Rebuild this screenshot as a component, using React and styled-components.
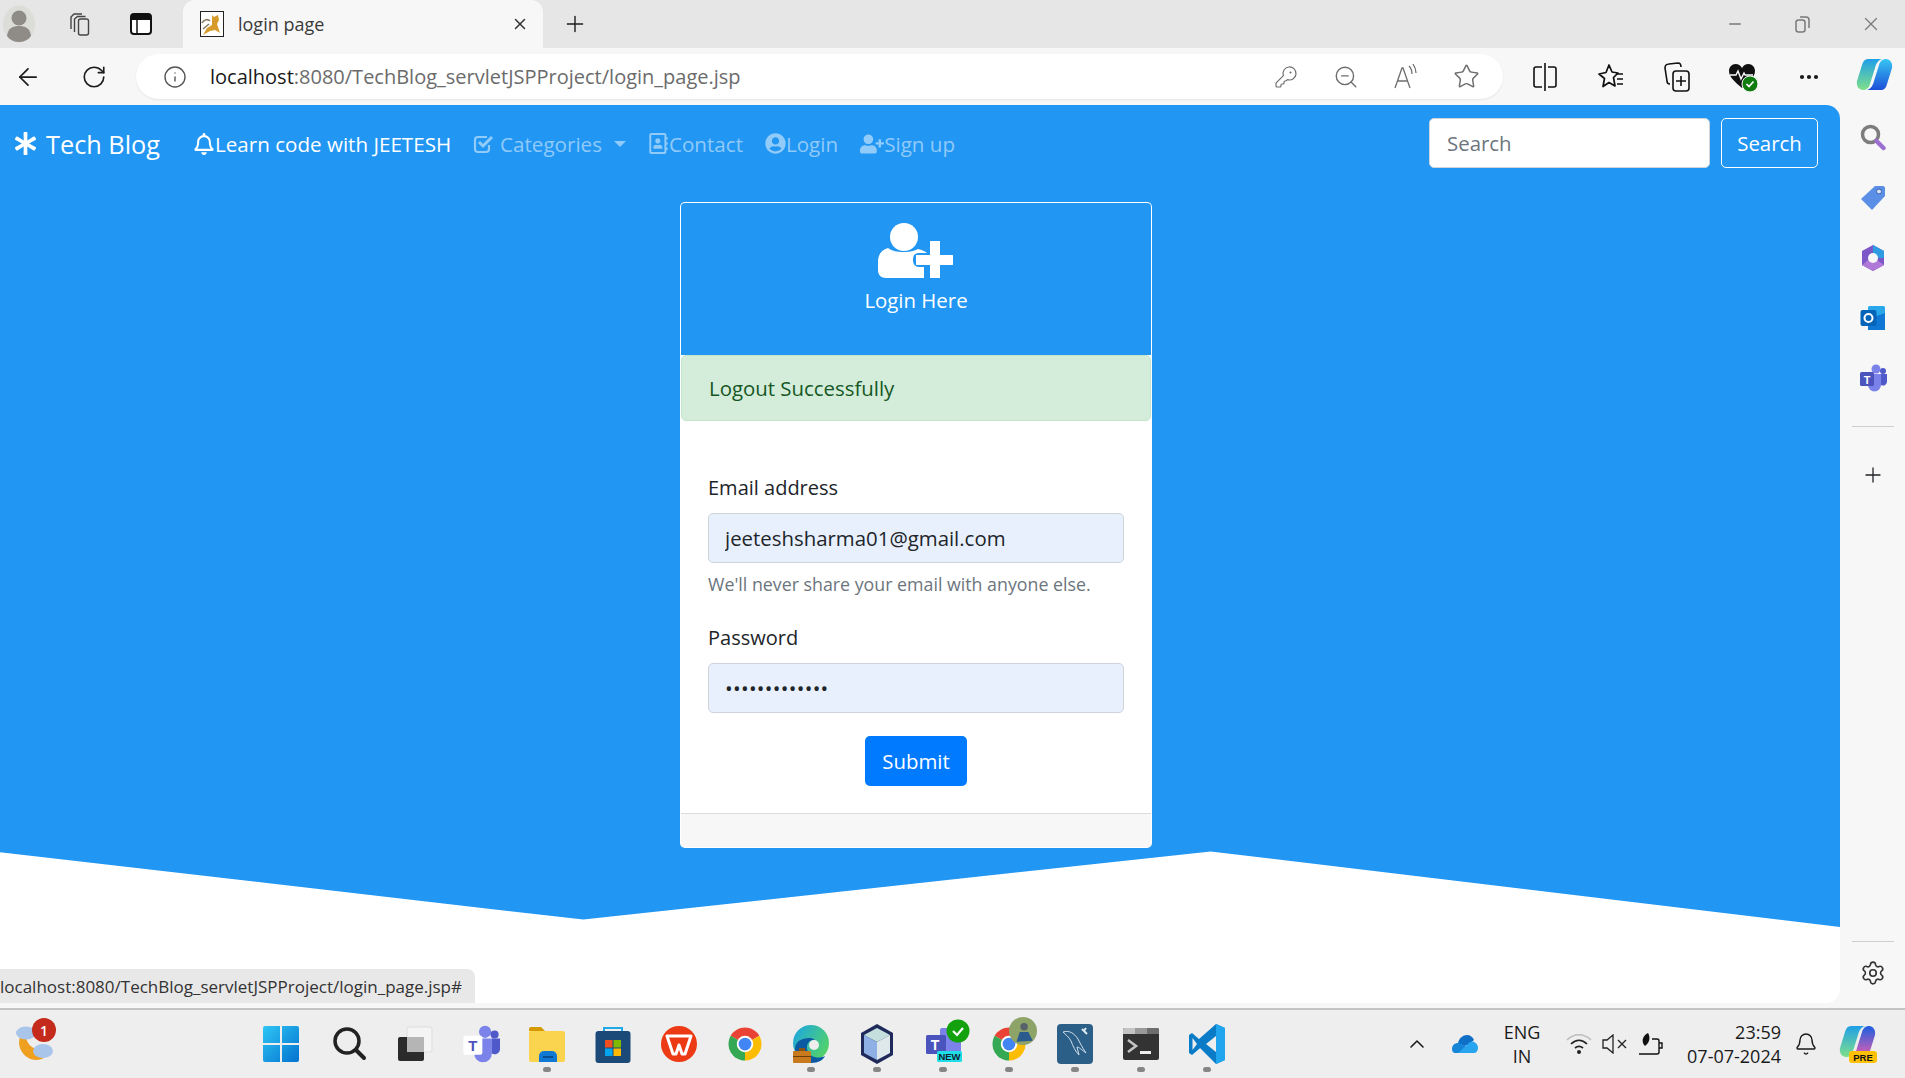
import React from 'react';
import styled, { createGlobalStyle } from 'styled-components';
import {
  ArrowLeft, RotateCw, Info, KeyRound, ZoomOut, Star, Plus, X, Minus, MoreHorizontal, ChevronUp, Bell, Settings,
} from 'lucide-react';
import { FaAsterisk, FaRegBell, FaUserCircle, FaUserPlus, FaRegAddressBook } from 'react-icons/fa';

const GlobalStyle = createGlobalStyle`
  html, body { margin: 0; padding: 0; height: 100%; overflow: hidden; }
  body { font-family: "Open Sans", "Noto Sans", "Liberation Sans", sans-serif; color: #212529; }
  * { box-sizing: border-box; }
`;

const Win = styled.div`
  display: flex;
  flex-direction: column;
  width: 1905px;
  height: 1078px;
  background: #f7f7f7;
`;

const TabStrip = styled.div`
  display: flex;
  align-items: center;
  gap: 22px;
  height: 48px;
  flex: none;
  background: #e6e6e6;
`;

const Slot = styled.div`
  display: flex;
  align-items: center;
  justify-content: center;
  flex: none;
  width: ${p => p.$w || 40}px;
  color: ${p => p.$color || '#1c1c1c'};
`;

const Tab = styled.div`
  display: flex;
  align-items: center;
  width: 360px;
  height: 48px;
  padding: 0 14px 0 17px;
  background: #f7f7f7;
  border-radius: 12px 12px 0 0;
`;

const TabTitle = styled.span`
  margin-left: 14px;
  font-size: 18px;
  color: #3a3a3a;
  flex: 1;
`;

const PlusSlot = styled(Slot)`
  margin-left: -10px;
`;

const WinControls = styled.div`
  display: flex;
  margin-left: auto;
`;

const Toolbar = styled.div`
  display: flex;
  align-items: center;
  height: 57px;
  flex: none;
  padding: 0 0 0 8px;
`;

const NavBtns = styled.div`
  display: flex;
  gap: 26px;
`;

const AddressBar = styled.div`
  display: flex;
  align-items: center;
  width: 1367px;
  height: 45px;
  margin-left: 22px;
  padding: 0 19px 0 27px;
  background: #fff;
  border-radius: 23px;
  box-shadow: 0 1px 2px rgba(0, 0, 0, 0.08);
`;

const Url = styled.div`
  margin-left: 23px;
  font-size: 20px;
  color: #6b6b6b;
  white-space: nowrap;
  b { font-weight: 400; color: #1a1a1a; }
`;

const BarIcons = styled.div`
  display: flex;
  gap: 24px;
  margin-left: auto;
`;

const ToolIcons = styled.div`
  display: flex;
  gap: 26px;
  margin-left: 22px;
`;

const Middle = styled.div`
  display: flex;
  flex: 1;
  min-height: 0;
`;

const Page = styled.main`
  position: relative;
  flex: none;
  width: 1840px;
  height: 898px;
  background: #fff;
  border-radius: 0 14px 14px 0;
  overflow: hidden;
`;

const Hero = styled.div`
  height: 822px;
  background: #2196f3;
  clip-path: polygon(0 0, 100% 0, 100% 100%, 65.8% 90.8%, 31.7% 99.1%, 0 90.9%);
`;

const Navbar = styled.nav`
  display: flex;
  align-items: center;
  height: 79px;
  padding: 0 22px 2px 14px;
  color: #fff;
`;

const Brand = styled.a`
  display: flex;
  align-items: center;
  gap: 9px;
  font-size: 25.3px;
  margin-right: 33px;
  white-space: nowrap;
`;

const NavLink = styled.a`
  display: flex;
  align-items: center;
  font-size: 20.6px;
  white-space: nowrap;
  margin-right: 22px;
  color: ${p => (p.$active ? '#fff' : 'rgba(255, 255, 255, 0.5)')};
`;

const Caret = styled.span`
  width: 0;
  height: 0;
  margin-left: 12px;
  border-top: 6px solid currentColor;
  border-left: 6px solid transparent;
  border-right: 6px solid transparent;
`;

const SearchForm = styled.form`
  display: flex;
  gap: 11px;
  margin: -1px 0 0 auto;
`;

const SearchInput = styled.input`
  width: 281px;
  height: 50px;
  padding: 0 17px;
  border: 1px solid #ced4da;
  border-radius: 5px;
  font: inherit;
  font-size: 20.4px;
  outline: none;
  &::placeholder { color: #6c757d; opacity: 1; }
`;

const SearchButton = styled.button`
  width: 97px;
  height: 50px;
  padding: 0;
  background: transparent;
  color: #fff;
  border: 1px solid #fff;
  border-radius: 5px;
  font: inherit;
  font-size: 20.4px;
`;

const CardRow = styled.div`
  display: flex;
  justify-content: center;
  padding: 18px 8px 0 0;
`;

const Card = styled.section`
  width: 472px;
  height: 646px;
  display: flex;
  flex-direction: column;
  background: #fff;
  border: 1px solid rgba(255, 255, 255, 0.7);
  border-radius: 5px;
  overflow: hidden;
`;

const CardHeader = styled.header`
  display: flex;
  flex-direction: column;
  align-items: center;
  height: 152px;
  padding-top: 20px;
  background: #2196f3;
  color: #fff;
  font-size: 20.4px;
`;

const HeaderTitle = styled.div`
  margin-top: 7px;
`;

const Alert = styled.div`
  height: 66px;
  display: flex;
  align-items: center;
  padding: 0 27px;
  background: #d4edda;
  border: 1px solid #c3e6cb;
  border-radius: 5px;
  color: #155724;
  font-size: 20.4px;
`;

const CardBody = styled.form`
  flex: 1;
  display: flex;
  flex-direction: column;
  padding: 52px 27px 0;
  margin: 0;
`;

const Label = styled.label`
  font-size: 20px;
  line-height: 30px;
  margin-bottom: 10px;
`;

const Field = styled.input`
  width: 100%;
  height: 50px;
  flex: none;
  padding: 0 16px 0;
  background: #e8f0fe;
  border: 1px solid #ced4da;
  border-radius: 5px;
  font: inherit;
  font-size: 20.4px;
  letter-spacing: ${p => p.$spacing || 0};
  color: #212529;
  outline: none;
`;

const Help = styled.small`
  font-size: 17.8px;
  line-height: 24px;
  margin: 9px 0 27px;
  color: #6c757d;
`;

const Submit = styled.button`
  align-self: center;
  width: 102px;
  height: 50px;
  margin-top: 23px;
  padding: 0;
  background: #007bff;
  border: 0;
  border-radius: 5px;
  color: #fff;
  font: inherit;
  font-size: 20.4px;
`;

const CardFooter = styled.footer`
  height: 34px;
  flex: none;
  background: #f7f7f7;
  border-top: 1px solid #dcdcdc;
`;

const StatusBubble = styled.div`
  position: absolute;
  left: 0;
  bottom: 0;
  width: 475px;
  height: 34px;
  display: flex;
  align-items: center;
  font-size: 17px;
  color: #333;
  white-space: nowrap;
  background: #e8e8e8;
  border-radius: 0 8px 0 0;
`;

const SidePanel = styled.aside`
  flex: 1;
  display: flex;
  flex-direction: column;
  align-items: center;
  padding-top: 3px;
`;

const SideItem = styled.div`
  display: flex;
  align-items: center;
  justify-content: center;
  height: ${p => p.$h || 60}px;
  flex: none;
`;

const SideRule = styled.div`
  width: 42px;
  height: 1px;
  background: #cfcfcf;
  margin-top: ${p => p.$top || 0}px;
`;

const SideBottom = styled.div`
  margin-top: auto;
  display: flex;
  flex-direction: column;
  align-items: center;
`;

const Taskbar = styled.footer`
  display: grid;
  grid-template-columns: 263px auto 1fr;
  align-items: center;
  height: 70px;
  flex: none;
  background: #eee;
  border-top: 2px solid #c4c4c4;
  margin-top: 5px;
`;

const Weather = styled.div`
  position: relative;
  width: 50px;
  height: 50px;
  margin: -8px 0 0 14px;
`;

const WeatherBadge = styled.span`
  position: absolute;
  top: 3px;
  right: 8px;
  width: 24px;
  height: 24px;
  display: flex;
  align-items: center;
  justify-content: center;
  border-radius: 50%;
  background: #c42b1c;
  color: #fff;
  font-size: 14px;
  font-weight: 600;
`;

const TaskIcons = styled.div`
  display: flex;
  gap: 26px;
`;

const TaskIcon = styled.div`
  position: relative;
  width: 40px;
  height: 40px;
  display: flex;
  align-items: center;
  justify-content: center;
  ${p => p.$running && `
    &::after {
      content: '';
      position: absolute;
      left: 16px;
      bottom: -8px;
      width: 8px;
      height: 5px;
      border-radius: 3px;
      background: #858585;
    }
  `}
`;

const StackedIcon = styled.div`
  position: relative;
  width: 40px;
  height: 40px;
`;

const StackedLayer = styled.div`
  position: absolute;
  display: flex;
  left: ${p => p.$left}px;
  top: ${p => p.$top}px;
`;

const Tray = styled.div`
  display: flex;
  align-items: center;
  justify-content: flex-end;
  height: 100%;
  color: #1a1a1a;
`;

const TrayItem = styled.div`
  display: flex;
  align-items: center;
  justify-content: center;
  flex: none;
  width: ${p => p.$w}px;
`;

const TwoLines = styled.div`
  display: flex;
  flex-direction: column;
  align-items: ${p => p.$align || 'center'};
  flex: none;
  width: ${p => p.$w}px;
  font-size: 18px;
  line-height: 24px;
`;

// drawings
const Avatar = () => (
  <svg width="34" height="38" viewBox="0 0 34 38">
    <ellipse cx="17" cy="19" rx="16" ry="18.5" fill="#dcdcd8" />
    <circle cx="17" cy="13" r="7.5" fill="#8f8c88" />
    <path d="M5 31c1-8 6-10 12-10s11 2 12 10c-3 4-7 6-12 6S8 35 5 31z" fill="#8f8c88" />
  </svg>
);

const TabsIcon = () => (
  <svg width="26" height="26" viewBox="0 0 26 26" fill="none" stroke="#444" strokeWidth="1.4">
    <path d="M5 18V6l3-3h8" />
    <path d="M8.5 21V8l3-2.5h8" />
    <rect x="12.5" y="8" width="10" height="16" rx="2" />
  </svg>
);

const VerticalTabs = () => (
  <svg width="24" height="24" viewBox="0 0 24 24">
    <rect x="2" y="2" width="20" height="20" rx="3" fill="#fff" stroke="#111" strokeWidth="2" />
    <path d="M3 3h18v5H3z" fill="#111" />
    <path d="M8 8v13" stroke="#111" strokeWidth="1.5" />
  </svg>
);

const Tomcat = () => (
  <svg width="24" height="26" viewBox="0 0 24 26">
    <rect x="0.5" y="0.5" width="23" height="25" fill="#fff" stroke="#222" />
    <path d="M12 4l2 2 4-2 1 5-2 4 3 9-5-3-5 1-7 4 4-7 5-3 0-6z" fill="#d79b2b" />
    <path d="M2 12c2-4 6-4 8-2M3 18l6-5" fill="none" stroke="#8a7a62" strokeWidth="1.6" />
  </svg>
);

const ReadAloud = () => (
  <svg width="30" height="30" viewBox="0 0 30 30" fill="none" stroke="#6e6e6e" strokeWidth="1.3">
    <path d="M4 26L11 6h1l7 20M7 19h9" />
    <path d="M18 4c2 2 3 5 3 8M22 2c2 3 3 6 3 9" />
  </svg>
);

const SplitScreen = () => (
  <svg width="26" height="30" viewBox="0 0 26 30" fill="none" stroke="#111" strokeWidth="1.6">
    <path d="M10 5H4a2 2 0 0 0-2 2v16a2 2 0 0 0 2 2h6M16 5h6a2 2 0 0 1 2 2v16a2 2 0 0 1-2 2h-6" />
    <path d="M13 1v28" />
  </svg>
);

const Favourites = () => (
  <svg width="28" height="30" viewBox="0 0 28 30" fill="none" stroke="#111" strokeWidth="1.7">
    <path d="M12 3l3 7 6 1-4.500 4.500L18 24l-6-3.500-6 4 1.500-8L2 12l7-1.500z" strokeLinejoin="round" />
    <path d="M19 12h7M20 17h6M20 22h6" />
  </svg>
);

const Collections = () => (
  <svg width="28" height="32" viewBox="0 0 28 32" fill="none" stroke="#111" strokeWidth="1.6">
    <path d="M7 23c-2 0-3-1-3-3L2 7c0-2 1-4 4-4l9-1c2 0 3 1 3 4" />
    <rect x="10" y="10" width="16" height="20" rx="3" />
    <path d="M18 15v10M13 20h10" />
  </svg>
);

const HeartStatus = () => (
  <svg width="32" height="32" viewBox="0 0 32 32">
    <path d="M15 27C8 21 2 16 2 10c0-4 3-7 6.500-7 3 0 5 1.500 6.500 4 1.500-2.500 3.500-4 6.500-4C25 3 28 6 28 10c0 6-6 11-13 17z" fill="#111" />
    <path d="M3 14h6l2-4 3 8 3-6 1 2h8" fill="none" stroke="#fff" strokeWidth="1.4" />
    <circle cx="23" cy="23" r="8" fill="#107c10" stroke="#f7f7f7" strokeWidth="1" />
    <path d="M19.500 23l2.500 2.500 4.500-5" fill="none" stroke="#fff" strokeWidth="1.700" />
  </svg>
);

const CheckSquare = () => (
  <svg width="22" height="20" viewBox="0 0 22 20" fill="none" stroke="currentColor" style={{ marginRight: 5 }}>
    <path d="M16 11v4a3 3 0 0 1-3 3H5a3 3 0 0 1-3-3V6a3 3 0 0 1 3-3h9" strokeWidth="2.200" />
    <path d="M6 8l4 4 9-9" strokeWidth="3" />
  </svg>
);

const CopilotMark = ({ pre }) => (
  <svg width="38" height="40" viewBox="0 0 38 40">
    <defs>
      <linearGradient id={pre ? 'cpA' : 'cpC'} x1="0" y1="0" x2="0" y2="1">
        <stop offset="0" stopColor="#1f9fe8" />
        <stop offset="1" stopColor="#7fe08a" />
      </linearGradient>
      <linearGradient id={pre ? 'cpB' : 'cpD'} x1="0" y1="0" x2="0" y2="1">
        <stop offset="0" stopColor={pre ? '#1b5fe0' : '#38c6f4'} />
        <stop offset="1" stopColor={pre ? '#e65fb0' : '#1b4fd8'} />
      </linearGradient>
    </defs>
    <path d="M12 2h14c-4 1-6 5-7 9l-5 16c-1 4-4 6-7 6-4 0-7-4-6-9L6 8c1-4 3-6 6-6z" fill={`url(#${pre ? 'cpA' : 'cpC'})`} />
    <path d="M25 33H11c4-1 6-5 7-9l5-16c1-4 4-6 7-6 4 0 7 4 6 9l-5 16c-1 4-3 6-6 6z" fill={`url(#${pre ? 'cpB' : 'cpD'})`} />
    {pre && <rect x="10" y="27" width="28" height="12" rx="3" fill="#ffc107" />}
    {pre && <text x="24" y="36.500" textAnchor="middle" fontSize="9.500" fontWeight="700" fontFamily="Liberation Sans, sans-serif" fill="#111">PRE</text>}
  </svg>
);

const UserPlusBig = () => (
  <svg width="76" height="56" viewBox="0 0 76 56">
    <circle cx="26" cy="14" r="14" fill="#fff" />
    <path d="M10 25c4 3 9 4 16 4s10-1 14-3c4 1 7 2 9 4h-8c-4 0-6 2-6 7 0 4 2 7 6 7h5v11H8c-5 0-8-3-8-8v-8c0-7 3-12 10-14z" fill="#fff" />
    <path d="M52 18h10v14h13v10H62v13H52V42H38V32h14z" fill="#fff" />
  </svg>
);

const SideSearch = () => (
  <svg width="26" height="28" viewBox="0 0 26 28" fill="none">
    <circle cx="10.500" cy="10.500" r="8" stroke="#7d7d7d" strokeWidth="3.500" />
    <path d="M16.500 17l7 7" stroke="#9a6fd0" strokeWidth="4.500" strokeLinecap="round" />
  </svg>
);

const SideTag = () => (
  <svg width="26" height="26" viewBox="0 0 26 26">
    <path d="M15 1h8c1 0 2 1 2 2v8L12 25 1 14z" fill="#5b8fe6" />
    <circle cx="19" cy="6.500" r="2.500" fill="#d5e2fa" stroke="#3c5fb0" />
  </svg>
);

const SideM365 = () => (
  <svg width="26" height="28" viewBox="0 0 26 28">
    <path d="M13 1l11 6v14l-11 6L2 21V7z" fill="#7b57c8" />
    <path d="M13 1l11 6v7h-7l-4-5z" fill="#2f9be0" />
    <path d="M2 21l11 6 11-6-7-5H8z" fill="#b079d8" />
    <circle cx="13" cy="14" r="5" fill="#f7f7f7" />
  </svg>
);

const SideOutlook = () => (
  <svg width="26" height="26" viewBox="0 0 26 26">
    <rect x="8" y="1" width="17" height="24" rx="1.500" fill="#28a8ea" />
    <path d="M8 14l17-6v17H8z" fill="#0f78d4" />
    <rect x="0.500" y="5" width="16" height="16" rx="2" fill="#0364b8" />
    <circle cx="8.500" cy="13" r="4" fill="none" stroke="#fff" strokeWidth="2" />
  </svg>
);

const TeamsMark = ({ size = 28 }) => (
  <svg width={size} height={size} viewBox="0 0 28 28">
    <circle cx="17" cy="5" r="4.500" fill="#7b83eb" />
    <circle cx="24" cy="7" r="3" fill="#5059c9" />
    <path d="M9 10h13v11a6.500 6.500 0 0 1-13 0z" fill="#7b83eb" />
    <path d="M22 10h6v8a4 4 0 0 1-6 3z" fill="#5059c9" />
    <rect x="1" y="8" width="14" height="14" rx="1.500" fill={size > 30 ? '#fff' : '#4b53bc'} />
    <text x="8" y="19.500" textAnchor="middle" fontSize="11" fontWeight="700" fontFamily="Liberation Sans, sans-serif" fill={size > 30 ? '#4b53bc' : '#fff'}>T</text>
  </svg>
);

const WeatherIcon = () => (
  <svg width="42" height="46" viewBox="0 0 42 46" style={{ marginTop: 4 }}>
    <path d="M6 18C2 30 12 41 22 41c8 0 13-5 14-11-10 3-22 0-24-12z" fill="#f0a020" />
    <ellipse cx="12" cy="14" rx="10" ry="6.500" fill="#a9c6ea" />
    <ellipse cx="29" cy="32" rx="10" ry="7" fill="#a9c6ea" />
  </svg>
);

const WindowsLogo = () => (
  <svg width="36" height="36" viewBox="0 0 36 36" style={{ marginLeft: -4 }}>
    <defs>
      <linearGradient id="winG" x1="0" y1="0" x2="1" y2="1">
        <stop offset="0" stopColor="#2fc6f5" />
        <stop offset="1" stopColor="#0372cf" />
      </linearGradient>
    </defs>
    <path d="M0 2a2 2 0 0 1 2-2h15v17H0zM19 0h15a2 2 0 0 1 2 2v15H19zM0 19h17v17H2a2 2 0 0 1-2-2zM19 19h17v15a2 2 0 0 1-2 2H19z" fill="url(#winG)" />
  </svg>
);

const TaskSearch = () => (
  <svg width="36" height="36" viewBox="0 0 36 36" fill="none" stroke="#222">
    <circle cx="16" cy="15" r="12" strokeWidth="3.500" />
    <path d="M25 24l8 8" strokeWidth="4" strokeLinecap="round" />
  </svg>
);

const TaskView = () => (
  <svg width="36" height="36" viewBox="0 0 36 36">
    <rect x="10" y="1" width="25" height="25" rx="2" fill="#f4f4f4" stroke="#ddd" />
    <rect x="1" y="11" width="26" height="24" rx="2" fill="#2b2b2b" />
    <rect x="10" y="11" width="17" height="15" fill="#b5b5b5" />
  </svg>
);

const Explorer = () => (
  <svg width="38" height="38" viewBox="0 0 38 38">
    <path d="M1 4a2 2 0 0 1 2-2h10l4 4h-16z" fill="#d49a00" />
    <rect x="1" y="6" width="36" height="31" rx="2" fill="#fbd44f" />
    <path d="M11 37v-6a5 5 0 0 1 5-5h8a5 5 0 0 1 5 5v6z" fill="#0f78d4" />
    <path d="M15 32h10" stroke="#063f7a" strokeWidth="1.500" />
  </svg>
);

const Store = () => (
  <svg width="36" height="38" viewBox="0 0 36 38">
    <path d="M9 8V3h18v5" fill="none" stroke="#1fa9e8" strokeWidth="2" />
    <rect x="0.500" y="6" width="35" height="32" rx="3" fill="#1c4a78" />
    <rect x="10" y="15" width="7.500" height="7.500" fill="#f25022" />
    <rect x="18.500" y="15" width="7.500" height="7.500" fill="#7fba00" />
    <rect x="10" y="23.500" width="7.500" height="7.500" fill="#00a4ef" />
    <rect x="18.500" y="23.500" width="7.500" height="7.500" fill="#ffb900" />
  </svg>
);

const Wps = () => (
  <svg width="36" height="36" viewBox="0 0 36 36">
    <circle cx="18" cy="18" r="18" fill="#ec3a14" />
    <path d="M6 10h24l-6 18h-3l-3-9-3 9h-3z" fill="none" stroke="#fff" strokeWidth="3" strokeLinejoin="round" />
  </svg>
);

const Chrome = () => (
  <svg width="36" height="36" viewBox="0 0 48 48">
    <path d="M24 24L4.950 13A22 22 0 0 1 43.050 13z" fill="#ea4335" />
    <path d="M24 24L43.050 13A22 22 0 0 1 24 46z" fill="#fbbc04" />
    <path d="M24 24V46A22 22 0 0 1 4.950 13z" fill="#34a853" />
    <circle cx="24" cy="24" r="11" fill="#fff" />
    <circle cx="24" cy="24" r="8.500" fill="#4285f4" />
  </svg>
);

const EdgeWork = () => (
  <svg width="36" height="38" viewBox="0 0 36 38">
    <defs>
      <linearGradient id="edgeG" x1="0" y1="0" x2="1" y2="0.600">
        <stop offset="0" stopColor="#19a4e8" />
        <stop offset="1" stopColor="#52d26a" />
      </linearGradient>
    </defs>
    <circle cx="18" cy="18" r="18" fill="url(#edgeG)" />
    <path d="M2 24c0 8 8 14 16 14s12-3 14-7c-6 3-16 2-18-7-1-6 4-10 8-9-4-4-20-2-20 9z" fill="#0c59a4" />
    <circle cx="21" cy="20" r="5" fill="#eee" />
    <rect y="26" width="18" height="12" rx="1" fill="#c97a1e" />
    <rect x="6" y="23" width="6" height="3" fill="#8a5210" />
    <rect y="31" width="18" height="1" fill="#6b3f0b" />
  </svg>
);

const Box3d = () => (
  <svg width="36" height="42" viewBox="0 0 36 42">
    <path d="M18 1l16 9v22l-16 9-16-9V10z" fill="#1f2a5a" />
    <path d="M18 5l13 7-13 7-13-7z" fill="#c4dfdd" />
    <path d="M5 12l13 7v18L5 30z" fill="#8fb0e4" />
    <path d="M31 12l-13 7v18l13-7z" fill="#dfe9ec" />
  </svg>
);

const TeamsNew = () => (
  <StackedIcon>
    <StackedLayer $left={3} $top={-5}>
      <svg width="48" height="46" viewBox="0 0 48 46">
        <rect x="14" y="9" width="21" height="29" rx="2" fill="#7b83eb" />
        <rect x="0" y="16" width="20" height="19" rx="1.500" fill="#4b53bc" />
        <text x="9" y="30.500" textAnchor="middle" fontSize="14" fontWeight="700" fontFamily="Liberation Sans, sans-serif" fill="#fff">T</text>
        <rect x="11" y="32" width="25" height="11" rx="1.500" fill="#1edde4" />
        <text x="23.500" y="41" textAnchor="middle" fontSize="9.500" fontWeight="700" fontFamily="Liberation Sans, sans-serif" fill="#123">NEW</text>
        <circle cx="32" cy="12" r="11.500" fill="#13a10e" />
        <path d="M27 12l4 4 6-7" fill="none" stroke="#fff" strokeWidth="2.200" />
      </svg>
    </StackedLayer>
  </StackedIcon>
);

const ChromeProfile = () => (
  <StackedIcon>
    <StackedLayer $left={2} $top={2}><Chrome /></StackedLayer>
    <StackedLayer $left={20} $top={-7}>
      <svg width="28" height="28" viewBox="0 0 26 26">
        <circle cx="13" cy="13" r="13" fill="#8ea368" />
        <circle cx="14" cy="9" r="3.500" fill="#55626a" />
        <path d="M7 23l3-9h8l4 8z" fill="#2a5b8c" />
      </svg>
    </StackedLayer>
  </StackedIcon>
);

const Mysql = () => (
  <svg width="36" height="40" viewBox="0 0 36 40">
    <rect width="36" height="40" rx="4" fill="#2c5f88" />
    <path d="M6 8c6-2 11 1 15 7 2 4 4 8 8 14-4-3-7-6-9-6l2 8c-4-4-6-9-8-14-2-4-5-6-8-9z" fill="none" stroke="#cfdee8" strokeWidth="1" />
    <path d="M25 5l5 5M29 4l-2 3" stroke="#dce7ee" strokeWidth="2" />
  </svg>
);

const Terminal = () => (
  <svg width="36" height="32" viewBox="0 0 36 32">
    <rect width="36" height="32" rx="2" fill="#333" />
    <path d="M0 2a2 2 0 0 1 2-2h10v6H0z" fill="#c4c4c4" />
    <rect x="12" y="0" width="12" height="6" fill="#9a9a9a" />
    <path d="M24 0h10a2 2 0 0 1 2 2v4H24z" fill="#6e6e6e" />
    <path d="M5 12l8 6-8 6" fill="none" stroke="#c4c4c4" strokeWidth="2.600" />
    <rect x="17" y="23" width="11" height="3" fill="#eee" />
  </svg>
);

const VsCode = () => (
  <svg width="36" height="40" viewBox="0 0 36 40">
    <path d="M27 0l9 4v32l-9 4-17-17 17-13z" fill="#0a7bc7" />
    <path d="M27 0l9 4v32l-9 4z" fill="#20a5ee" />
    <path d="M27 11L10 25l-7 6-3-2v-18l3-2 7 6L27 0z" fill="#0a7bc7" />
    <path d="M3.500 14L8 20l-4.500 6z" fill="#eee" />
    <path d="M27 12v16l-10-8z" fill="#eee" />
  </svg>
);

const OneDrive = () => (
  <svg width="26" height="20" viewBox="0 0 26 20">
    <path d="M6 9c1-5 5-8 9-8 3 0 6 2 7 5l-6 5-8 2z" fill="#0f6fc6" />
    <path d="M3 19c-2 0-3-2-3-4 0-4 3-6 6-6 3 0 5 1 7 3l7 7z" fill="#1685d8" />
    <path d="M6 19l10-9c1-2 4-3 6-2 3 1 4 4 4 6 0 3-2 5-4 5z" fill="#29a4ee" />
  </svg>
);

const Wifi = () => (
  <svg width="26" height="24" viewBox="0 0 26 24" fill="none" strokeWidth="1.700">
    <path d="M1 8c7-7 17-7 24 0" stroke="#bdbdbd" />
    <path d="M5 12c5-5 11-5 16 0M9 16c3-2.500 5-2.500 8 0" stroke="#222" />
    <circle cx="13" cy="20" r="2" fill="#222" />
  </svg>
);

const Mute = () => (
  <svg width="26" height="20" viewBox="0 0 26 20" fill="none" stroke="#222" strokeWidth="1.300">
    <path d="M1 6h4l6-5v18l-6-5H1z" />
    <path d="M16 6l8 8M24 6l-8 8" />
  </svg>
);

const BatteryLeaf = () => (
  <svg width="26" height="24" viewBox="0 0 26 24">
    <path d="M10 1c-6 3-7 9-3 13 4-3 6-8 3-13z" fill="#111" />
    <path d="M1 22h18a2 2 0 0 0 2-2V9a2 2 0 0 0-2-2h-5M21 11h3v5h-3" fill="none" stroke="#111" strokeWidth="1.400" />
  </svg>
);

const App = () => (
  <Win>
    <GlobalStyle />
    <TabStrip>
      <Slot $w={37}><Avatar /></Slot>
      <Slot><TabsIcon /></Slot>
      <Slot><VerticalTabs /></Slot>
      <Tab>
        <Tomcat />
        <TabTitle>login page</TabTitle>
        <X size={18} color="#333" />
      </Tab>
      <PlusSlot><Plus size={26} strokeWidth={1.3} /></PlusSlot>
      <WinControls>
        <Slot $w={68} $color="#7a7a7a"><Minus size={18} /></Slot>
        <Slot $w={68} $color="#7a7a7a">
          <svg width="18" height="20" viewBox="0 0 18 20" fill="none" stroke="currentColor" strokeWidth="1.500">
            <rect x="2" y="6" width="9" height="12" rx="2.500" />
            <path d="M6 3h6a3 3 0 0 1 3 3v8" />
          </svg>
        </Slot>
        <Slot $w={68} $color="#7a7a7a"><X size={22} strokeWidth={1.4} /></Slot>
      </WinControls>
    </TabStrip>

    <Toolbar>
      <NavBtns>
        <Slot><ArrowLeft size={28} strokeWidth={1.5} /></Slot>
        <Slot><RotateCw size={26} strokeWidth={1.5} /></Slot>
      </NavBtns>
      <AddressBar>
        <Info size={24} strokeWidth={1.4} color="#555" />
        <Url><b>localhost</b>:8080/TechBlog_servletJSPProject/login_page.jsp</Url>
        <BarIcons>
          <Slot $w={36} $color="#6e6e6e"><KeyRound size={24} strokeWidth={1.2} /></Slot>
          <Slot $w={36} $color="#6e6e6e"><ZoomOut size={26} strokeWidth={1.3} /></Slot>
          <Slot $w={36}><ReadAloud /></Slot>
          <Slot $w={36} $color="#6e6e6e"><Star size={27} strokeWidth={1.3} /></Slot>
        </BarIcons>
      </AddressBar>
      <ToolIcons>
        <Slot><SplitScreen /></Slot>
        <Slot><Favourites /></Slot>
        <Slot><Collections /></Slot>
        <Slot><HeartStatus /></Slot>
        <Slot><MoreHorizontal size={24} strokeWidth={2.2} /></Slot>
        <Slot><CopilotMark /></Slot>
      </ToolIcons>
    </Toolbar>

    <Middle>
      <Page>
        <Hero>
          <Navbar>
            <Brand><FaAsterisk size={23} />Tech Blog</Brand>
            <NavLink $active><FaRegBell size={22} />Learn code with JEETESH</NavLink>
            <NavLink><CheckSquare />Categories<Caret /></NavLink>
            <NavLink><FaRegAddressBook size={21} />Contact</NavLink>
            <NavLink><FaUserCircle size={21} />Login</NavLink>
            <NavLink><FaUserPlus size={24} />Sign up</NavLink>
            <SearchForm>
              <SearchInput placeholder="Search" aria-label="Search" />
              <SearchButton type="button">Search</SearchButton>
            </SearchForm>
          </Navbar>
          <CardRow>
            <Card>
              <CardHeader>
                <UserPlusBig />
                <HeaderTitle>Login Here</HeaderTitle>
              </CardHeader>
              <Alert>Logout Successfully</Alert>
              <CardBody>
                <Label htmlFor="email">Email address</Label>
                <Field id="email" type="email" defaultValue="jeeteshsharma01@gmail.com" />
                <Help>We'll never share your email with anyone else.</Help>
                <Label htmlFor="password">Password</Label>
                <Field id="password" type="password" defaultValue="jeetesh@12345" $spacing="0.3px" />
                <Submit type="button">Submit</Submit>
              </CardBody>
              <CardFooter />
            </Card>
          </CardRow>
        </Hero>
        <StatusBubble>localhost:8080/TechBlog_servletJSPProject/login_page.jsp#</StatusBubble>
      </Page>
      <SidePanel>
        <SideItem><SideSearch /></SideItem>
        <SideItem><SideTag /></SideItem>
        <SideItem><SideM365 /></SideItem>
        <SideItem><SideOutlook /></SideItem>
        <SideItem><TeamsMark /></SideItem>
        <SideRule $top={18} />
        <SideItem $h={96}><Plus size={24} strokeWidth={1.3} /></SideItem>
        <SideBottom>
          <SideRule />
          <SideItem $h={61}><Settings size={26} strokeWidth={1.5} color="#333" /></SideItem>
        </SideBottom>
      </SidePanel>
    </Middle>

    <Taskbar>
      <Weather>
        <WeatherIcon />
        <WeatherBadge>1</WeatherBadge>
      </Weather>
      <TaskIcons>
        <TaskIcon><WindowsLogo /></TaskIcon>
        <TaskIcon><TaskSearch /></TaskIcon>
        <TaskIcon><TaskView /></TaskIcon>
        <TaskIcon><TeamsMark size={38} /></TaskIcon>
        <TaskIcon $running><Explorer /></TaskIcon>
        <TaskIcon><Store /></TaskIcon>
        <TaskIcon><Wps /></TaskIcon>
        <TaskIcon><Chrome /></TaskIcon>
        <TaskIcon $running><EdgeWork /></TaskIcon>
        <TaskIcon $running><Box3d /></TaskIcon>
        <TaskIcon $running><TeamsNew /></TaskIcon>
        <TaskIcon $running><ChromeProfile /></TaskIcon>
        <TaskIcon $running><Mysql /></TaskIcon>
        <TaskIcon $running><Terminal /></TaskIcon>
        <TaskIcon $running><VsCode /></TaskIcon>
      </TaskIcons>
      <Tray>
        <TrayItem $w={60}><ChevronUp size={24} strokeWidth={1.6} /></TrayItem>
        <TrayItem $w={36}><OneDrive /></TrayItem>
        <TwoLines $w={78}><span>ENG</span><span>IN</span></TwoLines>
        <TrayItem $w={36}><Wifi /></TrayItem>
        <TrayItem $w={36}><Mute /></TrayItem>
        <TrayItem $w={36}><BatteryLeaf /></TrayItem>
        <TwoLines $w={112} $align="flex-end"><span>23:59</span><span>07-07-2024</span></TwoLines>
        <TrayItem $w={50}><Bell size={24} strokeWidth={1.4} /></TrayItem>
        <TrayItem $w={54}><CopilotMark pre /></TrayItem>
        <TrayItem $w={20} />
      </Tray>
    </Taskbar>
  </Win>
);

export default App;
